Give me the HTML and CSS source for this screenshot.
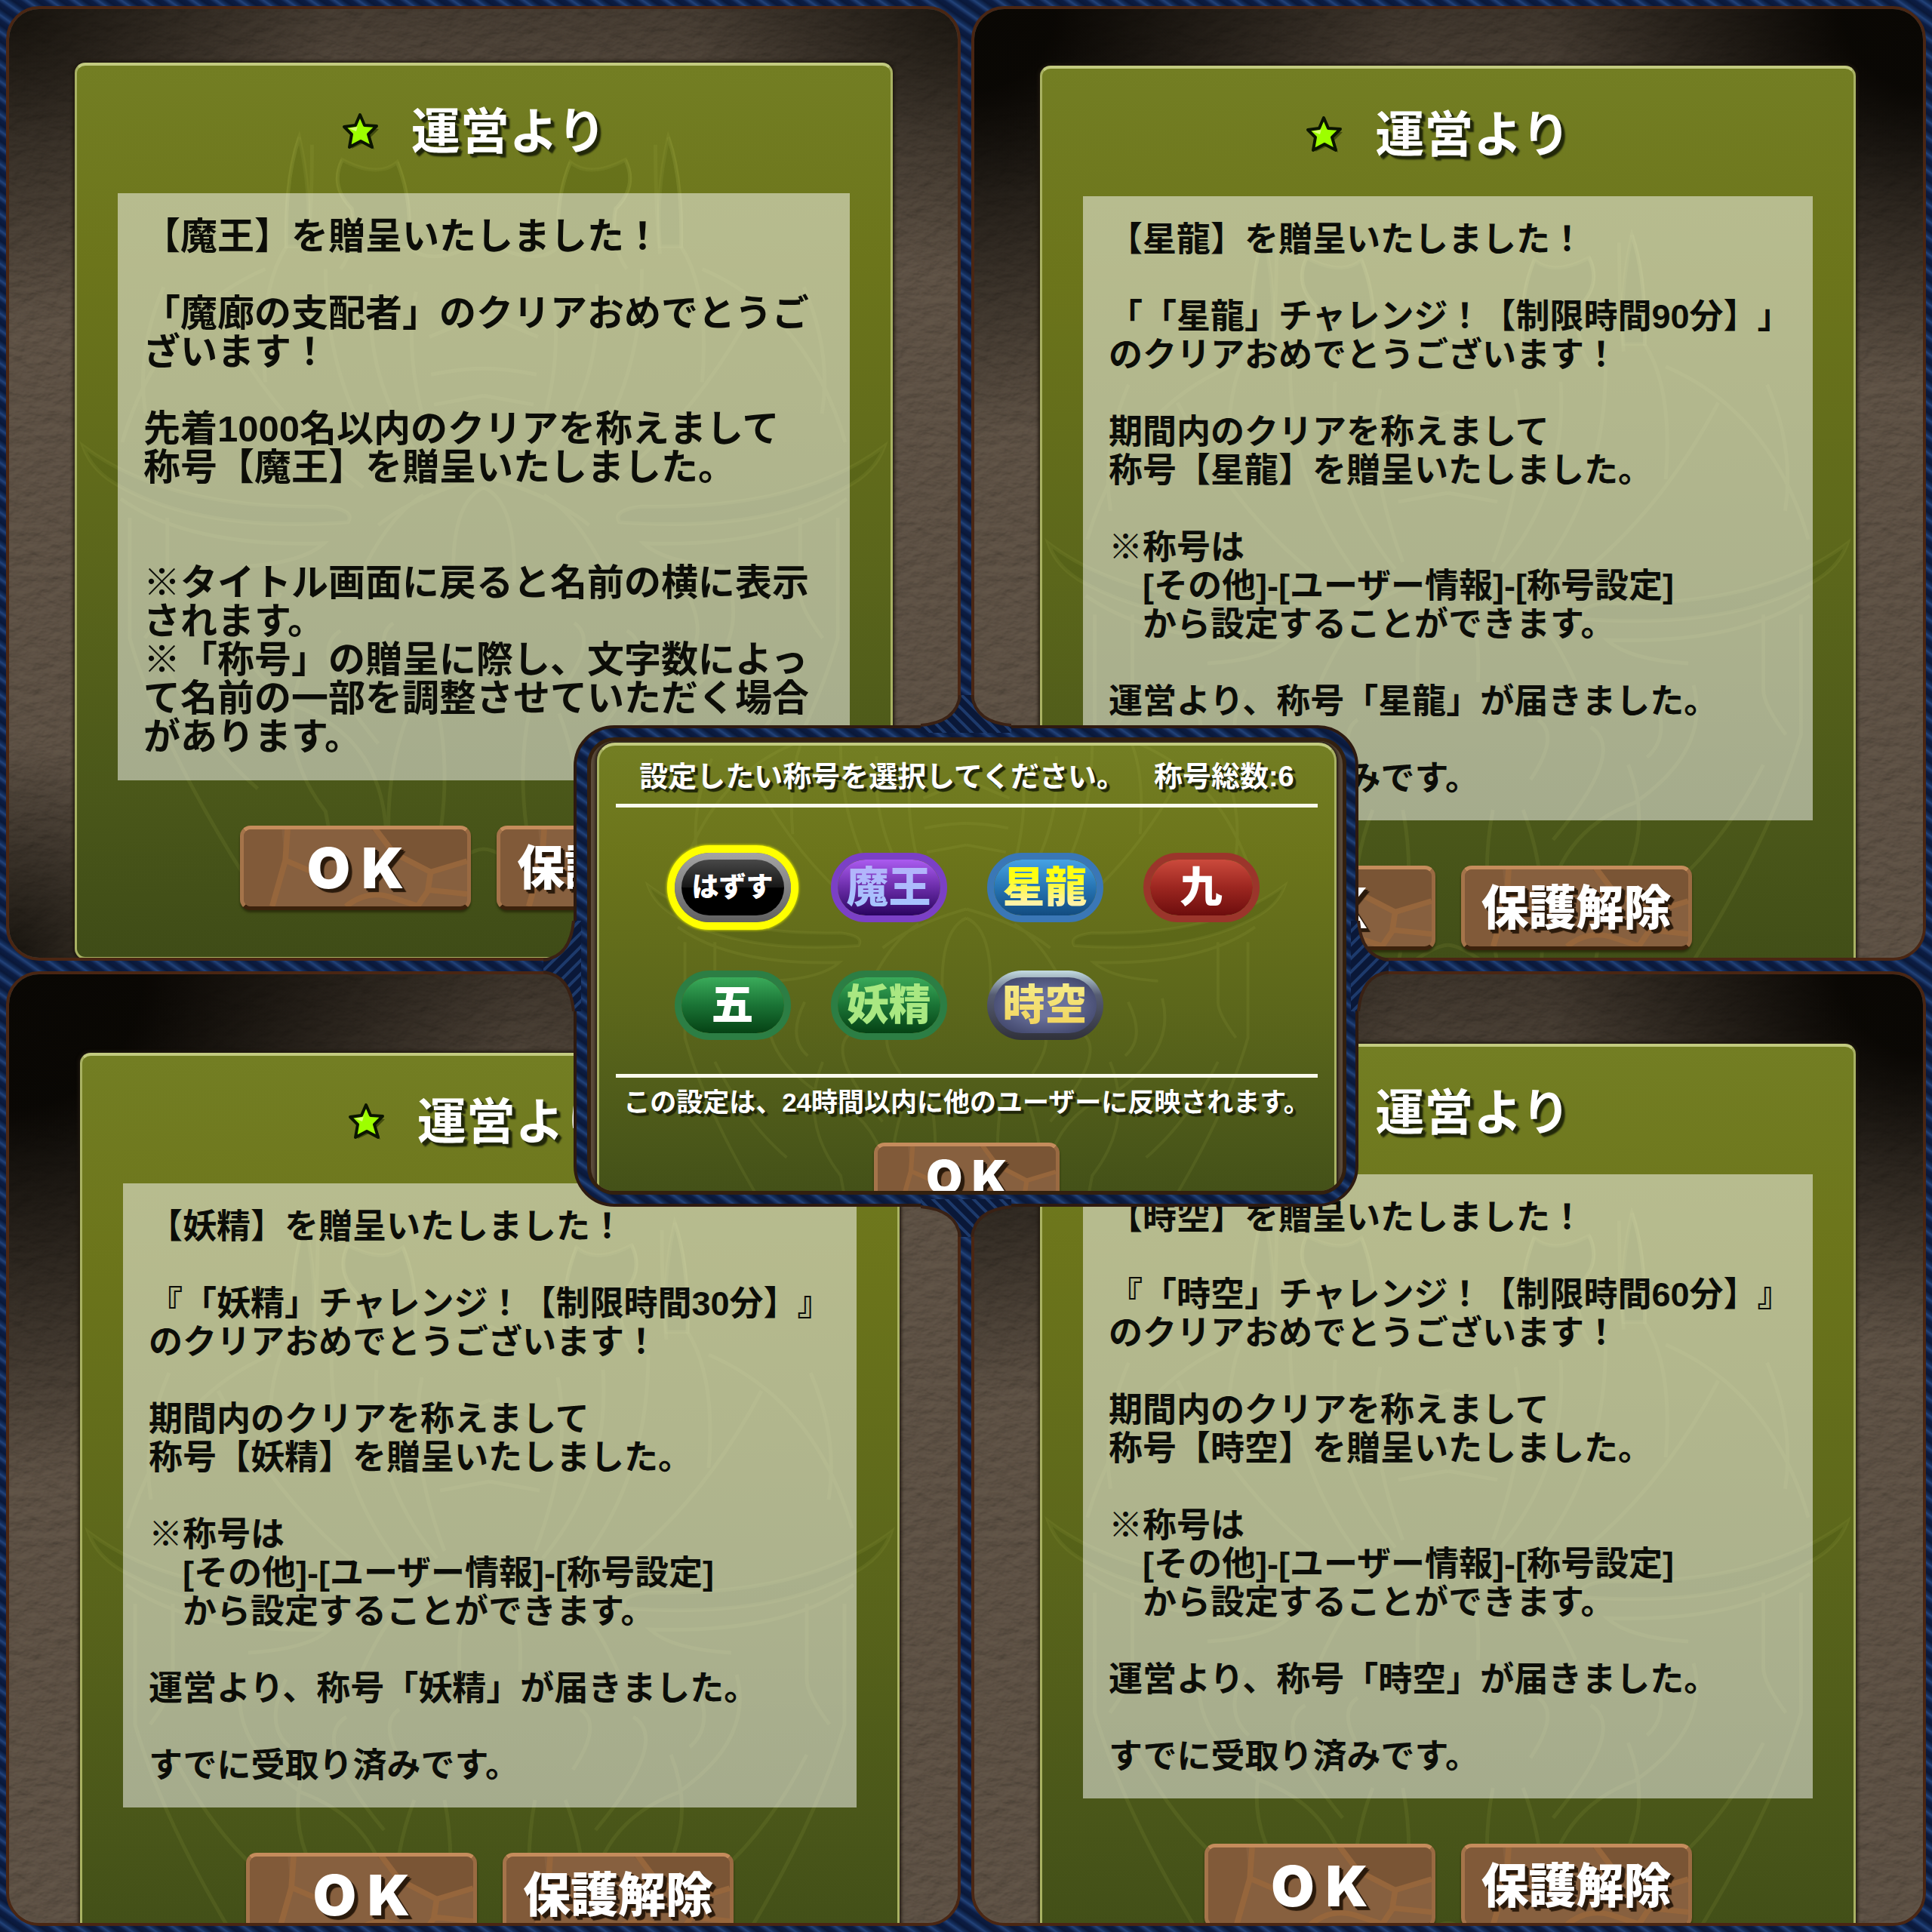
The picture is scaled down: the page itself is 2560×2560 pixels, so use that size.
FILE: index.html
```html
<!DOCTYPE html>
<html lang="ja">
<head>
    <meta charset="UTF-8">
    <meta name="viewport" content="width=device-width, initial-scale=1.0">
    <title>称号設定</title>
    <link rel="stylesheet" href="styles.css">
</head>
<body>
    <svg class="defs" aria-hidden="true">
        <filter id="rock" x="0" y="0" width="100%" height="100%">
            <feTurbulence type="fractalNoise" baseFrequency="0.045 0.07" numOctaves="4" seed="4" result="n"/>
            <feDiffuseLighting in="n" surfaceScale="2" lighting-color="#64574a">
                <feDistantLight azimuth="250" elevation="58"/>
            </feDiffuseLighting>
        </filter>
        <pattern id="denim" width="18" height="18" patternUnits="userSpaceOnUse">
            <rect width="18" height="18" fill="#0a1838"/>
            <path d="M-9 -9 L27 27 M-9 9 L9 27 M9 -9 L27 9" stroke="#1d3a6c" stroke-width="4"/>
        </pattern>
        <symbol id="star" viewBox="0 0 52 54">
            <path d="M27 9 L33 22 L49 23 L38 34 L43 50 L28 42 L13 49 L17 33 L7 23 L21 22 Z" fill="#1c2400" opacity=".55"/>
            <path d="M24 4 L30 18 L46 19 L35 30 L40 47 L25 39 L10 47 L13 30 L3 20 L18 18 Z" fill="#9dff00" stroke="#0b1400" stroke-width="4" stroke-linejoin="round"/>
            <path d="M24 9 L21 20 L9 22 L19 26 Z" fill="#d9ff7a"/>
        </symbol>
        <symbol id="cracks" viewBox="0 0 306 112" preserveAspectRatio="none">
            <path d="M175 0 L205 34 L256 62 L306 46 V0 Z" fill="#7a5535"/>
            <path d="M0 0 H52 L56 45 L38 112 H0 Z" fill="#815a39"/>
            <path d="M60 0 L57 45 L39 112 M57 45 L90 60 M178 -4 L205 34 L256 62 L306 46 M256 62 L252 90 L238 112 M252 88 L306 94 M140 112 Q168 88 200 98 L240 112" fill="none" stroke="#96663c" stroke-width="8"/>
        </symbol>
        <symbol id="half">
            <path d="M295 95 Q276 150 278 240 Q240 300 250 420 M312 105 Q312 190 306 250 M352 125 Q335 160 365 190 Q372 240 350 270 M425 128 Q446 180 440 240 Q470 270 540 232 M250 270 Q110 330 60 500 M180 318 Q260 470 380 560 M115 294 Q78 380 91 462 M330 270 Q330 440 430 560 M390 290 Q380 430 470 540 M450 300 Q430 400 480 530 M468 360 Q540 330 540 330 M470 410 Q510 402 540 402 M474 450 Q540 438 540 438"/>
            <path class="leaf" d="M8 505 Q120 590 330 585 Q370 590 360 606 Q170 620 60 560 Q20 540 8 505 Z"/>
            <path d="M58 575 Q150 640 328 634 Q300 660 220 665 M400 610 Q450 570 540 545 M370 690 Q410 600 460 570 M500 690 Q495 580 540 560 M120 600 V700 Q120 720 90 760 M70 600 V760 Q110 900 225 1080 M213 694 Q190 780 290 850 Q400 890 410 1010 M270 700 Q240 760 275 790 M420 740 Q390 760 430 820 M350 750 Q300 780 400 900 M300 800 Q260 900 330 990 L345 1070 M440 860 Q400 960 420 1100 M120 800 Q170 900 240 960 M480 860 Q500 960 470 1080 Q520 1040 540 1040"/>
            <path class="leaf" d="M352 125 Q335 160 365 190 Q372 220 360 240 L440 240 Q446 180 425 128 Q400 150 352 125 Z M295 95 Q276 150 278 240 H306 Q312 170 295 95 Z"/>
        </symbol>
        <symbol id="emblem" viewBox="0 0 1080 1187">
            <use href="#half"/>
            <use href="#half" transform="translate(1080 0) scale(-1 1)"/>
        </symbol>
        <symbol id="flare" viewBox="0 0 120 50">
            <path d="M52 0 Q48 36 0 40 V50 H120 V40 Q72 36 68 0 Z" fill="url(#denim)"/>
            <path d="M52 0 Q48 36 0 40 M120 40 Q72 36 68 0" fill="none" stroke="#3a2114" stroke-width="4"/>
        </symbol>
    </svg>

    <main class="board">
        <section class="cell cell-maou">
            <div class="card">
                <svg class="emblem"><use href="#emblem"/></svg>
                <h2 class="card-title"><svg class="star"><use href="#star"/></svg>運営より</h2>
                <p class="message message-large">【魔王】を贈呈いたしました！

「魔廊の支配者」のクリアおめでとうご
ざいます！

先着1000名以内のクリアを称えまして
称号【魔王】を贈呈いたしました。


※タイトル画面に戻ると名前の横に表示
されます。
※「称号」の贈呈に際し、文字数によっ
て名前の一部を調整させていただく場合
があります。</p>
                <div class="actions">
                    <button class="stone-btn ok" type="button"><svg><use href="#cracks"/></svg><span>O K</span></button>
                    <button class="stone-btn" type="button"><svg><use href="#cracks"/></svg><span>保護解除</span></button>
                </div>
            </div>
        </section>

        <section class="cell cell-seiryu">
            <div class="card">
                <svg class="emblem"><use href="#emblem"/></svg>
                <h2 class="card-title"><svg class="star"><use href="#star"/></svg>運営より</h2>
                <p class="message">【星龍】を贈呈いたしました！

「「星龍」チャレンジ！【制限時間90分】」
のクリアおめでとうございます！

期間内のクリアを称えまして
称号【星龍】を贈呈いたしました。

※称号は
　[その他]-[ユーザー情報]-[称号設定]
　から設定することができます。

運営より、称号「星龍」が届きました。

すでに受取り済みです。</p>
                <div class="actions">
                    <button class="stone-btn ok" type="button"><svg><use href="#cracks"/></svg><span>O K</span></button>
                    <button class="stone-btn" type="button"><svg><use href="#cracks"/></svg><span>保護解除</span></button>
                </div>
            </div>
        </section>

        <section class="cell cell-yousei">
            <div class="card">
                <svg class="emblem"><use href="#emblem"/></svg>
                <h2 class="card-title"><svg class="star"><use href="#star"/></svg>運営より</h2>
                <p class="message">【妖精】を贈呈いたしました！

『「妖精」チャレンジ！【制限時間30分】』
のクリアおめでとうございます！

期間内のクリアを称えまして
称号【妖精】を贈呈いたしました。

※称号は
　[その他]-[ユーザー情報]-[称号設定]
　から設定することができます。

運営より、称号「妖精」が届きました。

すでに受取り済みです。</p>
                <div class="actions">
                    <button class="stone-btn ok" type="button"><svg><use href="#cracks"/></svg><span>O K</span></button>
                    <button class="stone-btn" type="button"><svg><use href="#cracks"/></svg><span>保護解除</span></button>
                </div>
            </div>
        </section>

        <section class="cell cell-jikuu">
            <div class="card">
                <svg class="emblem"><use href="#emblem"/></svg>
                <h2 class="card-title"><svg class="star"><use href="#star"/></svg>運営より</h2>
                <p class="message">【時空】を贈呈いたしました！

『「時空」チャレンジ！【制限時間60分】』
のクリアおめでとうございます！

期間内のクリアを称えまして
称号【時空】を贈呈いたしました。

※称号は
　[その他]-[ユーザー情報]-[称号設定]
　から設定することができます。

運営より、称号「時空」が届きました。

すでに受取り済みです。</p>
                <div class="actions">
                    <button class="stone-btn ok" type="button"><svg><use href="#cracks"/></svg><span>O K</span></button>
                    <button class="stone-btn" type="button"><svg><use href="#cracks"/></svg><span>保護解除</span></button>
                </div>
            </div>
        </section>
    </main>

    <section class="picker">
        <svg class="flare flare-top"><use href="#flare"/></svg>
        <svg class="flare flare-bottom"><use href="#flare"/></svg>
        <svg class="flare flare-left"><use href="#flare"/></svg>
        <svg class="flare flare-right"><use href="#flare"/></svg>
        <div class="picker-frame">
            <div class="card picker-card">
                <svg class="emblem"><use href="#emblem"/></svg>
                <h2 class="picker-title">設定したい称号を選択してください。　称号総数:6</h2>
                <div class="badges">
                    <button class="badge badge-off selected" type="button" aria-pressed="true"><span>はずす</span></button>
                    <button class="badge badge-maou" type="button"><span>魔王</span></button>
                    <button class="badge badge-seiryu" type="button"><span>星龍</span></button>
                    <button class="badge badge-nine" type="button"><span>九</span></button>
                    <button class="badge badge-five" type="button"><span>五</span></button>
                    <button class="badge badge-yousei" type="button"><span>妖精</span></button>
                    <button class="badge badge-jikuu" type="button"><span>時空</span></button>
                </div>
                <p class="picker-note">この設定は、24時間以内に他のユーザーに反映されます。</p>
                <div class="actions">
                    <button class="stone-btn ok small" type="button"><svg><use href="#cracks"/></svg><span>O K</span></button>
                </div>
            </div>
        </div>
    </section>
</body>
</html>
```
FILE: styles.css
```css
* {
    box-sizing: border-box;
}
body {
    margin: 0;
    height: 100vh;
    position: relative;
    overflow: hidden;
    font-family: "Liberation Sans", "Noto Sans CJK JP", sans-serif;
    font-weight: 700;
    text-spacing-trim: space-all;
    background: repeating-linear-gradient(35deg, #0a1838 0, #0c1d44 6px, #23437a 11px, #15305f 13px, #0a1838 18px);
}
h2, p {
    margin: 0;
    font-weight: inherit;
}
button {
    font-family: inherit;
    font-weight: inherit;
    padding: 0;
    cursor: pointer;
}
.defs {
    position: absolute;
    width: 0;
    height: 0;
}

/* 2x2 board */
.board {
    height: 100%;
    padding: 8px;
    display: grid;
    grid-template-columns: 1fr 1fr;
    grid-template-rows: minmax(0, 1fr) minmax(0, 1fr);
    gap: 14px;
}
.cell {
    position: relative;
    isolation: isolate;
    overflow: hidden;
    border: 4px solid #4a2613;
    border-radius: 44px;
    background: #54483a;
}
.cell::before, .cell::after {
    content: "";
    position: absolute;
    inset: 0;
}
.cell::before {
    filter: url(#rock);
}
.cell::after {
    background: linear-gradient(rgba(10, 7, 3, .3), transparent 14%),
        radial-gradient(circle at 0 0, rgba(10, 8, 4, .8), transparent 24%),
        radial-gradient(circle at 100% 0, rgba(10, 8, 4, .7), transparent 20%),
        radial-gradient(circle at 0 100%, rgba(10, 8, 4, .85), transparent 16%);
}
.cell-maou {
    padding: 71px 86px 0 87px;
}
.cell-seiryu {
    padding: 75px 89px 0 87px;
}
.cell-yousei {
    padding: 104px 77px 0 94px;
}
.cell-jikuu {
    padding: 92px 89px 0 87px;
}
.cell-seiryu::after, .cell-yousei::after, .cell-jikuu::after {
    background: linear-gradient(rgba(10, 7, 3, .4), transparent 20%),
        radial-gradient(circle at 0 0, rgba(8, 6, 3, .98) 6%, transparent 32%),
        radial-gradient(circle at 100% 0, rgba(8, 6, 3, .98) 6%, transparent 28%);
}
.cell-yousei::after {
    background: linear-gradient(rgba(10, 7, 3, .4), transparent 20%),
        radial-gradient(circle at 0 0, rgba(8, 6, 3, .98) 10%, transparent 38%);
}

/* green card */
.card {
    position: relative;
    z-index: 1;
    padding: 52px 54px 62px;
    overflow: hidden;
    border: 3px solid #a9b263;
    border-top: 4px solid #c3cb80;
    border-radius: 14px;
    background: linear-gradient(#737e23, #6c751b 22%, #5b661b 55%, #485519 85%, #3f4c17);
    box-shadow: 0 0 4px 2px #1d160e;
}
.emblem {
    position: absolute;
    left: 0;
    top: 0;
    width: 100%;
    aspect-ratio: 1080 / 1187;
    fill: none;
    stroke: rgba(190, 200, 90, .1);
    stroke-width: 5;
}
.leaf {
    fill: rgba(40, 60, 0, .1);
}
.cell-seiryu .emblem, .cell-yousei .emblem, .cell-jikuu .emblem {
    top: 126px;
}
.card-title {
    position: relative;
    display: flex;
    justify-content: center;
    align-items: center;
    gap: 40px;
    padding-right: 26px;
    font-size: 65px;
    line-height: 72px;
    color: #fff;
    text-shadow: 3px 3px 1px #22280a, 5px 5px 2px #22280a;
}
.star {
    width: 52px;
    height: 54px;
}
.message {
    position: relative;
    margin-top: 45px;
    padding: 32px 34px 30px;
    font-size: 45px;
    line-height: 51px;
    white-space: pre;
    color: #0c0d08;
    background: rgba(255, 255, 255, .5);
}
.message-large {
    padding-bottom: 32px;
    font-size: 49px;
}
.actions {
    position: relative;
    margin-top: 60px;
    display: flex;
    justify-content: center;
    gap: 34px;
}
.stone-btn {
    position: relative;
    width: 306px;
    height: 112px;
    overflow: hidden;
    border: 5px solid;
    border-color: #c58c5c #9a6a42 #3c220c #a5744a;
    border-radius: 14px;
    background: #87603f;
    color: #fff;
    font-size: 63px;
    font-weight: 900;
    line-height: 72px;
    text-shadow: 3px 3px 0 #2a1a0c, 5px 5px 1px #2a1a0c;
    box-shadow: 0 3px 3px #2c300c;
}
.stone-btn svg {
    position: absolute;
    left: 0;
    top: 0;
    width: 100%;
    height: 100%;
}
.stone-btn span {
    position: relative;
}
.ok {
    font-family: Inter, sans-serif;
    font-size: 74px;
}

/* title picker on top of the board */
.picker {
    position: absolute;
    left: 50%;
    top: 50%;
    width: 1040px;
    height: 638px;
    transform: translate(-50%, -50%);
    padding: 12px 12px 12px 14px;
    border: 4px solid #2e1a10;
    border-radius: 54px;
    background: repeating-linear-gradient(35deg, #0a1838 0, #0c1d44 6px, #23437a 11px, #15305f 13px, #0a1838 18px);
}
.flare {
    position: absolute;
    width: 120px;
    height: 50px;
}
.flare-top {
    top: -44px;
    left: calc(50% - 60px);
}
.flare-bottom {
    bottom: -44px;
    left: calc(50% - 60px);
    transform: rotate(180deg);
}
.flare-left {
    left: -79px;
    top: calc(50% - 25px);
    transform: rotate(-90deg);
}
.flare-right {
    right: -79px;
    top: calc(50% - 25px);
    transform: rotate(90deg);
}
.picker-frame {
    position: relative;
    height: 100%;
    padding: 2px 8px 0;
    overflow: hidden;
    border: 5px solid #33200f;
    border-radius: 36px;
    background: #5c4c3c;
}
.picker-card {
    padding: 16px 22px 26px;
    border-bottom: 0;
    border-radius: 24px 24px 0 0;
}
.picker-card .emblem {
    left: 6%;
    top: -216px;
    width: 88%;
}
.picker-title, .picker-note {
    position: relative;
    color: #fff;
    line-height: 51px;
    text-align: center;
    white-space: nowrap;
    text-shadow: 3px 3px 1px #22280a, 4px 4px 1px #22280a;
}
.picker-title {
    padding-bottom: 10px;
    border-bottom: 5px solid #fbfbee;
    font-size: 38px;
}
.picker-note {
    margin-top: 45px;
    padding-top: 7px;
    border-top: 5px solid #fbfbee;
    font-size: 35px;
}
.badges {
    position: relative;
    margin-top: 60px;
    display: grid;
    grid-template-columns: repeat(4, 154px);
    justify-content: center;
    gap: 64px 53px;
}
.badge {
    height: 92px;
    border: 9px solid;
    border-radius: 46px;
    font-size: 56px;
    font-weight: 900;
    line-height: 70px;
    display: flex;
    justify-content: center;
    align-items: center;
    white-space: nowrap;
    color: #fff;
}
.badge span {
    background-clip: text;
    -webkit-background-clip: text;
}
.badge-off {
    border-color: transparent;
    background: linear-gradient(#484848, #161616 50%, #000 50%) padding-box, linear-gradient(#a4a4a4, #606060) border-box;
    font-size: 36px;
}
.selected {
    box-shadow: 0 0 0 10px #ffff00, 0 0 3px 11px #c8d000;
}
.badge-maou {
    border-color: #7b40c6;
    background: linear-gradient(#ab5bf0, #6a2ca8 50%, #2a0460) padding-box;
}
.badge-maou span {
    color: transparent;
    background-image: linear-gradient(#b6b0fa, #a3c8ff);
}
.badge-seiryu {
    border-color: #3a77b6;
    background: linear-gradient(#45a2e4, #2470ae 55%, #124c80) padding-box;
}
.badge-seiryu span {
    color: transparent;
    background-image: linear-gradient(#ffff10 30%, #fff2a8 80%);
}
.badge-nine {
    border-color: #9b352b;
    background: linear-gradient(#cb4a3c, #9c2620 50%, #6d0d0d) padding-box;
}
.badge-five, .badge-yousei {
    border-color: #2c7e44;
    background: linear-gradient(#3aab5a, #1a7335 50%, #054214) padding-box;
}
.badge-yousei span {
    color: #a9e882;
}
.badge-jikuu {
    border-color: transparent;
    background: radial-gradient(#6a719c 30%, #353a5c) padding-box, linear-gradient(#c4dce2, #565c72 35%, #30313a) border-box;
}
.badge-jikuu span {
    color: transparent;
    background-image: linear-gradient(#f6ee8c, #f0d058);
}
.small {
    width: 246px;
    height: 92px;
    margin-top: -32px;
    font-size: 62px;
}
```
